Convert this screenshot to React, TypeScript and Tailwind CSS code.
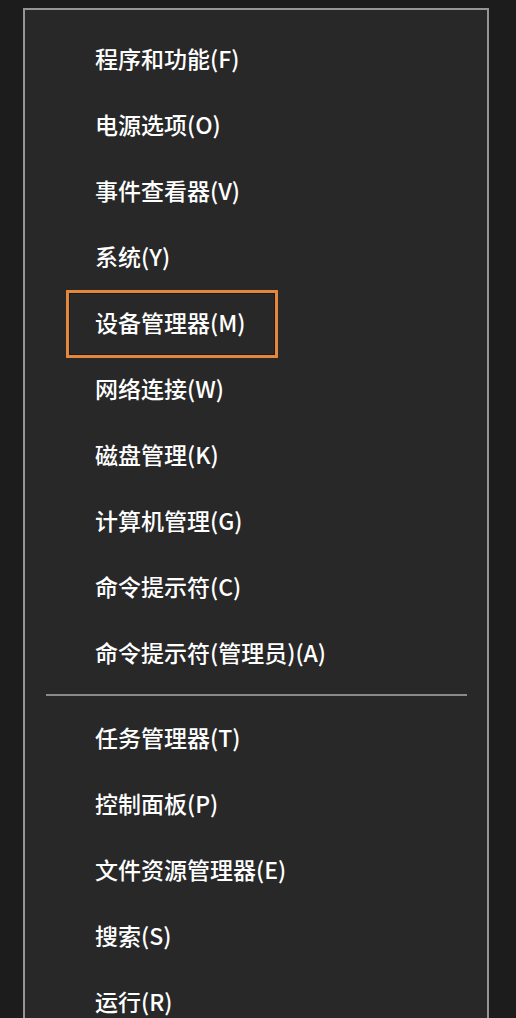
import React from "react";

const top = [
  "程序和功能(F)",
  "电源选项(O)",
  "事件查看器(V)",
  "系统(Y)",
  "设备管理器(M)",
  "网络连接(W)",
  "磁盘管理(K)",
  "计算机管理(G)",
  "命令提示符(C)",
  "命令提示符(管理员)(A)",
];
const bottom = [
  "任务管理器(T)",
  "控制面板(P)",
  "文件资源管理器(E)",
  "搜索(S)",
  "运行(R)",
];

function Row({ label, hl }: { label: string; hl?: boolean }) {
  return (
    <div className="relative h-[66px] flex items-center pl-[70px]">
      {hl && (
        <div className="absolute left-[41px] top-[1px] w-[212px] h-[68px] border-[3px] border-[#e3873d] shadow-[inset_0_0_0_1px_#1a1a1a]" />
      )}
      <span className="text-[23px] leading-none font-medium text-white">{label}</span>
    </div>
  );
}

export default function App() {
  return (
    <div
      className="w-[516px] h-[1018px] overflow-hidden bg-[#1c1c1c] pt-[8px] pl-[23px]"
      style={{ fontFamily: '"Noto Sans CJK SC", "Noto Sans", sans-serif' }}
    >
      <div className="w-[466px] h-[1040px] bg-[#282828] border-2 border-[#959595] pt-[15px]">
        {top.map((t, i) => (
          <Row key={t} label={t} hl={i === 4} />
        ))}
        <div className="pt-[9px] pb-[8px] pl-[21px] pr-[20px]">
          <div className="h-[2px] bg-[#8a8a8a]" />
        </div>
        {bottom.map((t) => (
          <Row key={t} label={t} />
        ))}
      </div>
    </div>
  );
}
